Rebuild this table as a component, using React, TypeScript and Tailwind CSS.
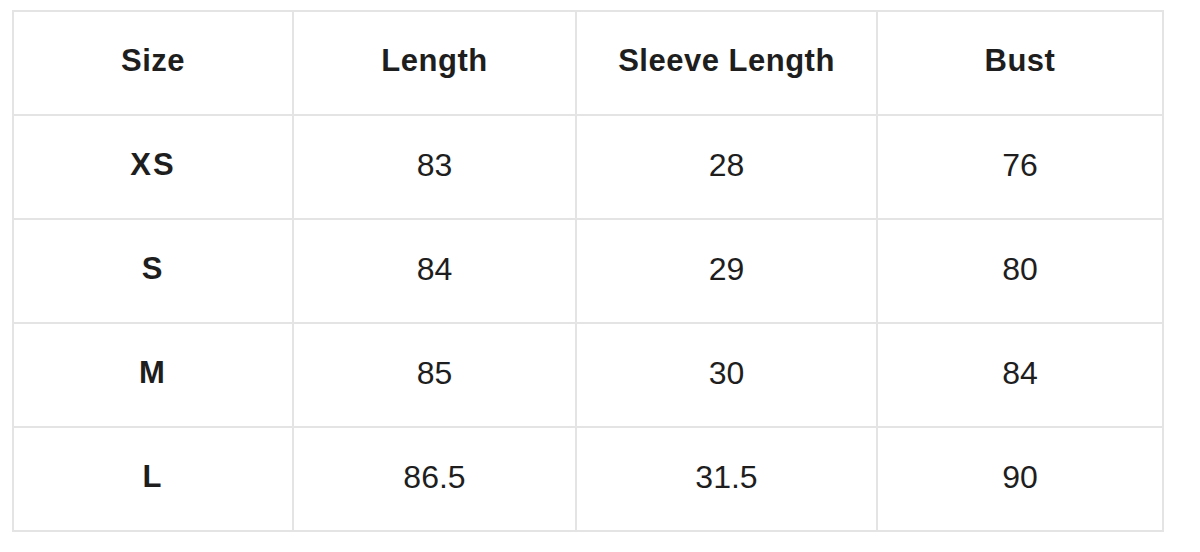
import React from 'react';

const headers = ['Size', 'Length', 'Sleeve Length', 'Bust'];

const rows = [
  ['XS', '83', '28', '76'],
  ['S', '84', '29', '80'],
  ['M', '85', '30', '84'],
  ['L', '86.5', '31.5', '90'],
];

const App: React.FC = () => {
  return (
    <div className="w-[1200px] h-[552px] bg-white pt-[10px] pl-[12px] font-['Liberation_Sans',Arial,sans-serif] text-[#1e1e1e]">
      {/* size chart */}
      <div className="grid w-fit grid-cols-[278px_281px_299px_284px] auto-rows-[102px] gap-[2px] bg-[#e4e4e4] p-[2px]">
        {headers.map((h) => (
          <div key={h} className="flex items-center justify-center bg-white pb-[3px] text-[31px] font-bold tracking-[0.5px]">
            {h}
          </div>
        ))}
        {rows.map((r) =>
          r.map((cell, i) => (
            <div
              key={r[0] + i}
              className={
                i === 0
                  ? 'flex items-center justify-center bg-white pb-[4px] text-[31px] font-bold tracking-[2px]'
                  : 'flex items-center justify-center bg-white pb-[4px] text-[32px]'
              }
            >
              {cell}
            </div>
          ))
        )}
      </div>
    </div>
  );
};

export default App;
